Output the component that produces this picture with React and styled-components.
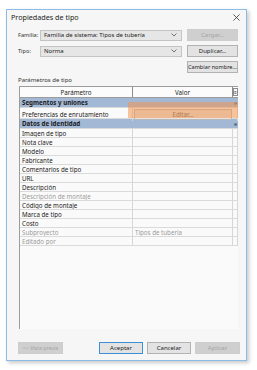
import React from "react";
import styled, { createGlobalStyle } from "styled-components";

const Global = createGlobalStyle`
  html, body {
    margin: 0;
    padding: 0;
    background: #ffffff;
  }
  body {
    font-family: "Noto Sans", "Open Sans", sans-serif;
    font-size: 7px;
    color: #1e1e1e;
  }
`;

const Page = styled.div`
  padding: 9px 0 0 6px;
  width: 257px;
  height: 370px;
  box-sizing: border-box;
`;

const Dialog = styled.div`
  width: 241px;
  height: 352px;
  box-sizing: border-box;
  border: 1px solid #8bbbe6;
  background: #f6f6f6;
  box-shadow: 2px 2px 4px rgba(0, 0, 0, 0.22);
  display: flex;
  flex-direction: column;
`;

const TitleBar = styled.div`
  height: 14px;
  display: flex;
  align-items: center;
  justify-content: space-between;
  padding: 0 6px 0 4px;
  font-size: 7.2px;
  color: #222;
`;

const Close = styled.svg`
  width: 7px;
  height: 7px;
`;

const Body = styled.div`
  flex: 1;
  display: flex;
  flex-direction: column;
  padding: 5px 6px 6px 11px;
`;

const FormRow = styled.div`
  display: grid;
  grid-template-columns: 19px 142px 53px;
  column-gap: 3px;
  align-items: center;
  height: 12px;
  margin-bottom: ${(p) => p.$gap || 4}px;

  & > :last-child {
    margin-left: 2px;
  }
`;

const Label = styled.span`
  font-size: 5.6px;
  color: #333;
  white-space: nowrap;
`;

const Combo = styled.div`
  height: 11px;
  box-sizing: border-box;
  border: 1px solid #c4c4c4;
  background: #e6e6e6;
  display: flex;
  align-items: center;
  justify-content: space-between;
  padding: 0 4px 0 3px;
  font-size: 6px;
  color: #222;
`;

const Button = styled.div`
  height: ${(p) => p.$h || 12}px;
  width: ${(p) => p.$w || "auto"};
  box-sizing: border-box;
  border: 1px solid ${(p) => (p.$primary ? "#3f8fd8" : p.$disabled ? "#cdcdcd" : "#b2b2b2")};
  background: ${(p) => (p.$disabled ? "#cfcfcf" : "#e3e3e3")};
  color: ${(p) => (p.$disabled ? "#a4a4a4" : "#222")};
  display: flex;
  align-items: center;
  justify-content: center;
  font-size: ${(p) => p.$fs || 6}px;
  white-space: nowrap;
  overflow: hidden;
`;

const SectionLabel = styled.div`
  font-size: 6px;
  color: #333;
  margin: 0 0 2px 0;
`;

const TableBox = styled.div`
  position: relative;
  margin-left: 1px;
  width: 219px;
  height: 243px;
  box-sizing: border-box;
  border-left: 1px solid #9c9c9c;
  background: #fafafa;
`;

const Row = styled.div`
  display: grid;
  grid-template-columns: 113px 100px 5px;
  height: ${(p) => p.$h || 9}px;
  box-sizing: border-box;
  border-bottom: 1px solid #dadada;
  background: ${(p) => (p.$group ? "#a2b8d5" : "transparent")};
  font-size: 6.2px;
`;

const HeadRow = styled(Row)`
  height: 12px;
  border-top: 1px solid #9c9c9c;
  border-bottom: 1px solid #9c9c9c;
  background: #fcfcfc;
`;

const Cell = styled.div`
  display: flex;
  align-items: center;
  justify-content: ${(p) => (p.$center ? "center" : "flex-start")};
  padding-left: ${(p) => (p.$center ? 0 : 2)}px;
  border-right: 1px solid ${(p) => (p.$dark ? "#8c8c8c" : "#d6d6d6")};
  color: ${(p) => (p.$muted ? "#9a9a9a" : "#222")};
  white-space: nowrap;
  overflow: hidden;
`;

const GroupCell = styled.div`
  grid-column: 1 / 3;
  display: flex;
  align-items: center;
  padding-left: 2px;
  font-weight: 700;
  color: #1a1a1a;
`;

const Caret = styled.div`
  display: flex;
  align-items: center;
  justify-content: center;
  font-size: 5px;
  font-weight: 700;
  color: #333;
`;

const HeadBtn = styled.div`
  border: 1px solid #8c8c8c;
  margin: 1px 0;
  display: flex;
  align-items: center;
  justify-content: center;
  font-size: 5px;
`;

const EditBtn = styled.div`
  margin: 1px 1px;
  border: 1px solid #b8b8b8;
  background: #e4e4e4;
  display: flex;
  align-items: center;
  justify-content: center;
  color: #555;
`;

const Highlight = styled.div`
  position: absolute;
  left: 108px;
  top: 16px;
  width: 110px;
  height: 16px;
  background: rgba(242, 150, 80, 0.55);
  pointer-events: none;
`;

const Footer = styled.div`
  margin-top: auto;
  display: flex;
  align-items: center;
`;

const Spacer = styled.div`
  width: ${(p) => p.$w}px;
`;

const rows = [
  { name: "Imagen de tipo" },
  { name: "Nota clave" },
  { name: "Modelo" },
  { name: "Fabricante" },
  { name: "Comentarios de tipo" },
  { name: "URL" },
  { name: "Descripción" },
  { name: "Descripción de montaje", muted: true },
  { name: "Código de montaje" },
  { name: "Marca de tipo" },
  { name: "Costo" },
  { name: "Subproyecto", muted: true, value: "Tipos de tubería" },
  { name: "Editado por", muted: true },
];

const Chevron = () => (
  <svg width="6" height="4" viewBox="0 0 6 4">
    <path d="M0.5 0.5 L3 3 L5.5 0.5" fill="none" stroke="#555" strokeWidth="0.8" />
  </svg>
);

export default function App() {
  return (
    <Page>
      <Global />
      <Dialog>
        <TitleBar>
          <span>Propiedades de tipo</span>
          <Close viewBox="0 0 8 8">
            <path d="M0.5 0.5 L7.5 7.5 M7.5 0.5 L0.5 7.5" stroke="#333" strokeWidth="0.9" />
          </Close>
        </TitleBar>
        <Body>
          <FormRow>
            <Label>Familia:</Label>
            <Combo>
              <span>Familia de sistema: Tipos de tubería</span>
              <Chevron />
            </Combo>
            <Button $disabled>Cargar...</Button>
          </FormRow>
          <FormRow>
            <Label>Tipo:</Label>
            <Combo>
              <span>Norma</span>
              <Chevron />
            </Combo>
            <Button>Duplicar...</Button>
          </FormRow>
          <FormRow $gap={3}>
            <span />
            <span />
            <Button $fs={5.6}>Cambiar nombre...</Button>
          </FormRow>
          <SectionLabel>Parámetros de tipo</SectionLabel>
          <TableBox>
            <HeadRow>
              <Cell $center $dark>Parámetro</Cell>
              <Cell $center $dark>Valor</Cell>
              <HeadBtn>≡</HeadBtn>
            </HeadRow>
            <Row $group $h={10}>
              <GroupCell>Segmentos y uniones</GroupCell>
              <Caret>»</Caret>
            </Row>
            <Row $h={11}>
              <Cell>Preferencias de enrutamiento</Cell>
              <EditBtn>Editar...</EditBtn>
              <Cell />
            </Row>
            <Row $group $h={10}>
              <GroupCell>Datos de identidad</GroupCell>
              <Caret>»</Caret>
            </Row>
            {rows.map((r) => (
              <Row key={r.name}>
                <Cell $muted={r.muted}>{r.name}</Cell>
                <Cell $muted={r.muted}>{r.value || ""}</Cell>
                <Cell />
              </Row>
            ))}
            <Highlight />
          </TableBox>
          <Footer>
            <Button $disabled $w="45px" $fs={5.2}>&lt;&lt; Vista previa</Button>
            <Spacer $w={36} />
            <Button $primary $w="44px">Aceptar</Button>
            <Spacer $w={4} />
            <Button $w="44px">Cancelar</Button>
            <Spacer $w={4} />
            <Button $disabled $w="45px">Aplicar</Button>
          </Footer>
        </Body>
      </Dialog>
    </Page>
  );
}
